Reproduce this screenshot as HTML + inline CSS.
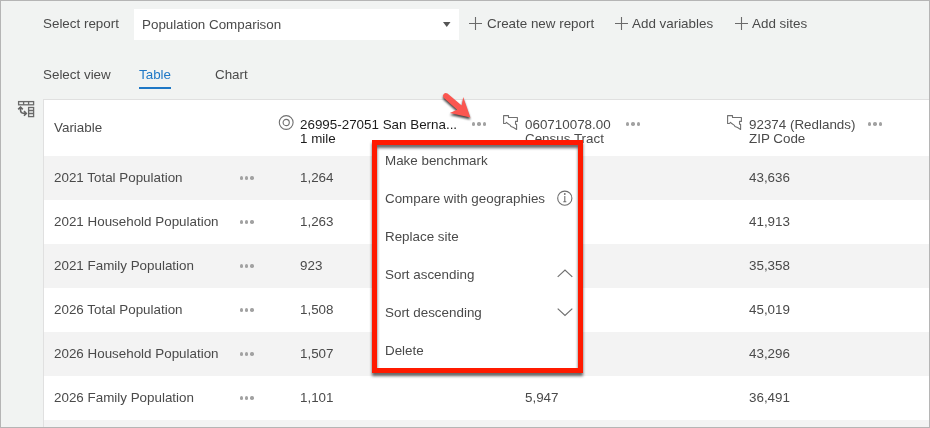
<!DOCTYPE html>
<html><head><meta charset="utf-8">
<style>
*{margin:0;padding:0;box-sizing:border-box}
html,body{width:930px;height:428px;overflow:hidden;-webkit-font-smoothing:antialiased}
.a,.mi{will-change:transform}
body{position:relative;background:#f1f3f2;font-family:"Liberation Sans",sans-serif;font-size:13.4px;color:#4a4a4a}
.a{position:absolute;white-space:nowrap;line-height:16px}
.frame{position:absolute;left:0;top:0;width:930px;height:428px;border:1px solid #b5b5b5;pointer-events:none;z-index:50}
.sel{position:absolute;left:134px;top:9px;width:325px;height:31px;background:#fff}
.tbl{position:absolute;left:43px;top:99px;width:887px;height:329px;background:#fff;border-left:1px solid #e0e0e0;border-top:1px solid #e0e0e0}
.row{position:absolute;left:44px;width:886px;height:44px}
.g{background:#f3f3f3}
.dots{position:absolute;width:15px;height:4px}
.dots i{position:absolute;top:0;width:3.4px;height:3.4px;border-radius:50%;background:#a2a2a2}
.dots i:nth-child(1){left:0}.dots i:nth-child(2){left:5.3px}.dots i:nth-child(3){left:10.6px}
.menu{position:absolute;left:377px;top:145px;width:201px;height:223px;background:#fff}
.mi{position:absolute;left:385px;white-space:nowrap;line-height:16px}
.redbox{position:absolute;left:372px;top:140px;width:211px;height:233px;border:5px solid #ff1a00;filter:drop-shadow(0.6px 3px 1.4px rgba(0,0,0,.6));z-index:20}
.dk{color:#1c1c1c}
</style></head><body>
<div class="frame"></div>

<!-- top bar -->
<div class="a" style="left:43px;top:15.8px">Select report</div>
<div class="sel"></div>
<div class="a" style="left:142px;top:17.2px">Population Comparison</div>
<svg class="a" style="left:443px;top:22px" width="8" height="6"><path d="M0 0H7.5L3.75 5Z" fill="#555"/></svg>

<svg class="a" style="left:468px;top:16px" width="15" height="15"><path d="M7.5 1V14M1 7.5H14" stroke="#6a6a6a" stroke-width="1.1" fill="none"/></svg>
<div class="a" style="left:487px;top:15.8px">Create new report</div>
<svg class="a" style="left:614px;top:16px" width="15" height="15"><path d="M7.5 1V14M1 7.5H14" stroke="#6a6a6a" stroke-width="1.1" fill="none"/></svg>
<div class="a" style="left:632px;top:15.8px">Add variables</div>
<svg class="a" style="left:734px;top:16px" width="15" height="15"><path d="M7.5 1V14M1 7.5H14" stroke="#6a6a6a" stroke-width="1.1" fill="none"/></svg>
<div class="a" style="left:752px;top:15.8px">Add sites</div>

<!-- tabs -->
<div class="a" style="left:43px;top:66.8px">Select view</div>
<div class="a" style="left:139px;top:66.8px;color:#1f78c6">Table</div>
<div style="position:absolute;left:139px;top:87px;width:32px;height:2px;background:#1f78c6"></div>
<div class="a" style="left:215px;top:66.8px">Chart</div>

<!-- table icon -->
<svg class="a" style="left:14px;top:98px" width="24" height="22"><g stroke="#6a6a6a" stroke-width="1.3" fill="none"><rect x="4.6" y="3.6" width="15" height="3.2"/><path d="M9.6 3.6V6.8M14.6 3.6V6.8"/><rect x="14.6" y="9.5" width="5" height="9.1"/><path d="M14.6 12.5H19.6M14.6 15.5H19.6"/></g><g stroke="#646464" stroke-width="1.6" fill="none" stroke-linejoin="miter"><path d="M4.2 11.4L6.5 9.1L8.8 11.4"/><path d="M6.5 9.5V12.3C6.6 14 8 15.4 10.2 15.4H12"/><path d="M10 13.1L12.3 15.4L10 17.7"/></g></svg>

<!-- table -->
<div class="tbl"></div>
<div class="row g" style="top:156px"></div>
<div class="row g" style="top:244px"></div>
<div class="row g" style="top:332px"></div>
<div class="row g" style="top:420px"></div>

<div class="a" style="left:54px;top:120px">Variable</div>

<div class="a" style="left:54px;top:169.5px">2021 Total Population</div>
<div class="a" style="left:54px;top:213.5px">2021 Household Population</div>
<div class="a" style="left:54px;top:257.5px">2021 Family Population</div>
<div class="a" style="left:54px;top:301.5px">2026 Total Population</div>
<div class="a" style="left:54px;top:345.5px">2026 Household Population</div>
<div class="a" style="left:54px;top:389.5px">2026 Family Population</div>


<!-- header cols -->
<svg class="a" style="left:277px;top:113px" width="19" height="19"><circle cx="9.2" cy="9.5" r="6.9" stroke="#707070" stroke-width="1.1" fill="none"/><circle cx="9.2" cy="9.5" r="3.1" stroke="#707070" stroke-width="1.1" fill="none"/></svg>
<div class="a dk" style="left:300px;top:116.5px">26995-27051 San Berna...</div>
<div class="a dk" style="left:300px;top:130.5px">1 mile</div>
<div class="dots" style="left:472px;top:122.3px"><i></i><i></i><i></i></div>

<svg class="a" style="left:500px;top:112px" width="22" height="22"><path d="M3.6 3.6H8.5V5.5H17.4V9.4H15.5V12.3H16.6V17.4L13.5 15.6L11 14.5L10.4 13.4L7.4 11.3L6.5 10.3L5.4 11.5H3.6Z" stroke="#707070" stroke-width="1.1" fill="none" stroke-linejoin="round"/></svg>
<div class="a" style="left:525px;top:116.5px">060710078.00</div>
<div class="a" style="left:525px;top:130.5px">Census Tract</div>
<div class="dots" style="left:626px;top:122.3px"><i></i><i></i><i></i></div>

<svg class="a" style="left:724px;top:112px" width="22" height="22"><path d="M3.6 3.6H8.5V5.5H17.4V9.4H15.5V12.3H16.6V17.4L13.5 15.6L11 14.5L10.4 13.4L7.4 11.3L6.5 10.3L5.4 11.5H3.6Z" stroke="#707070" stroke-width="1.1" fill="none" stroke-linejoin="round"/></svg>
<div class="a" style="left:749px;top:116.5px">92374 (Redlands)</div>
<div class="a" style="left:749px;top:130.5px">ZIP Code</div>
<div class="dots" style="left:868px;top:122.3px"><i></i><i></i><i></i></div>
<div class="dots" style="left:239.6px;top:176.3px"><i></i><i></i><i></i></div>
<div class="a" style="left:300px;top:169.5px">1,264</div>
<div class="a" style="left:749px;top:169.5px">43,636</div>
<div class="dots" style="left:239.6px;top:220.3px"><i></i><i></i><i></i></div>
<div class="a" style="left:300px;top:213.5px">1,263</div>
<div class="a" style="left:749px;top:213.5px">41,913</div>
<div class="dots" style="left:239.6px;top:264.3px"><i></i><i></i><i></i></div>
<div class="a" style="left:300px;top:257.5px">923</div>
<div class="a" style="left:749px;top:257.5px">35,358</div>
<div class="dots" style="left:239.6px;top:308.3px"><i></i><i></i><i></i></div>
<div class="a" style="left:300px;top:301.5px">1,508</div>
<div class="a" style="left:749px;top:301.5px">45,019</div>
<div class="dots" style="left:239.6px;top:352.3px"><i></i><i></i><i></i></div>
<div class="a" style="left:300px;top:345.5px">1,507</div>
<div class="a" style="left:749px;top:345.5px">43,296</div>
<div class="dots" style="left:239.6px;top:396.3px"><i></i><i></i><i></i></div>
<div class="a" style="left:300px;top:389.5px">1,101</div>
<div class="a" style="left:524.5px;top:389.5px">5,947</div>
<div class="a" style="left:749px;top:389.5px">36,491</div>

<!-- menu -->
<div class="menu"></div>
<div class="mi" style="top:152.5px">Make benchmark</div>
<div class="mi" style="top:190.5px">Compare with geographies</div>
<div class="mi" style="top:228.5px">Replace site</div>
<div class="mi" style="top:266.5px">Sort ascending</div>
<div class="mi" style="top:304.5px">Sort descending</div>
<div class="mi" style="top:342.5px">Delete</div>
<svg class="a" style="left:555px;top:188px" width="20" height="20"><circle cx="9.8" cy="10.2" r="7.1" stroke="#6e6e6e" stroke-width="1.1" fill="none"/><circle cx="9.8" cy="6" r="0.9" fill="#6e6e6e"/><path d="M9.8 8V13.6M8.3 13.8H11.3" stroke="#6e6e6e" stroke-width="1.1" fill="none"/></svg>
<svg class="a" style="left:555px;top:266px" width="20" height="14"><path d="M2.7 10.9L10 4.1L17.3 10.9" stroke="#707070" stroke-width="1.2" fill="none"/></svg>
<svg class="a" style="left:555px;top:304px" width="20" height="14"><path d="M2.7 4.6L10 11.5L17.3 4.6" stroke="#707070" stroke-width="1.2" fill="none"/></svg>
<div class="redbox"></div>

<!-- arrow -->
<svg class="a" style="left:430px;top:85px;z-index:30;filter:drop-shadow(0.3px 2.6px 1px rgba(0,0,0,.75))" width="50" height="40"><path d="M40.4 32.4L33.2 12.1L31.7 20.6L17.5 8.6A2.9 2.9 0 0 0 13.6 12.8L27.1 24.8L19.8 28Z" fill="#fb5650"/></svg>
</body></html>
